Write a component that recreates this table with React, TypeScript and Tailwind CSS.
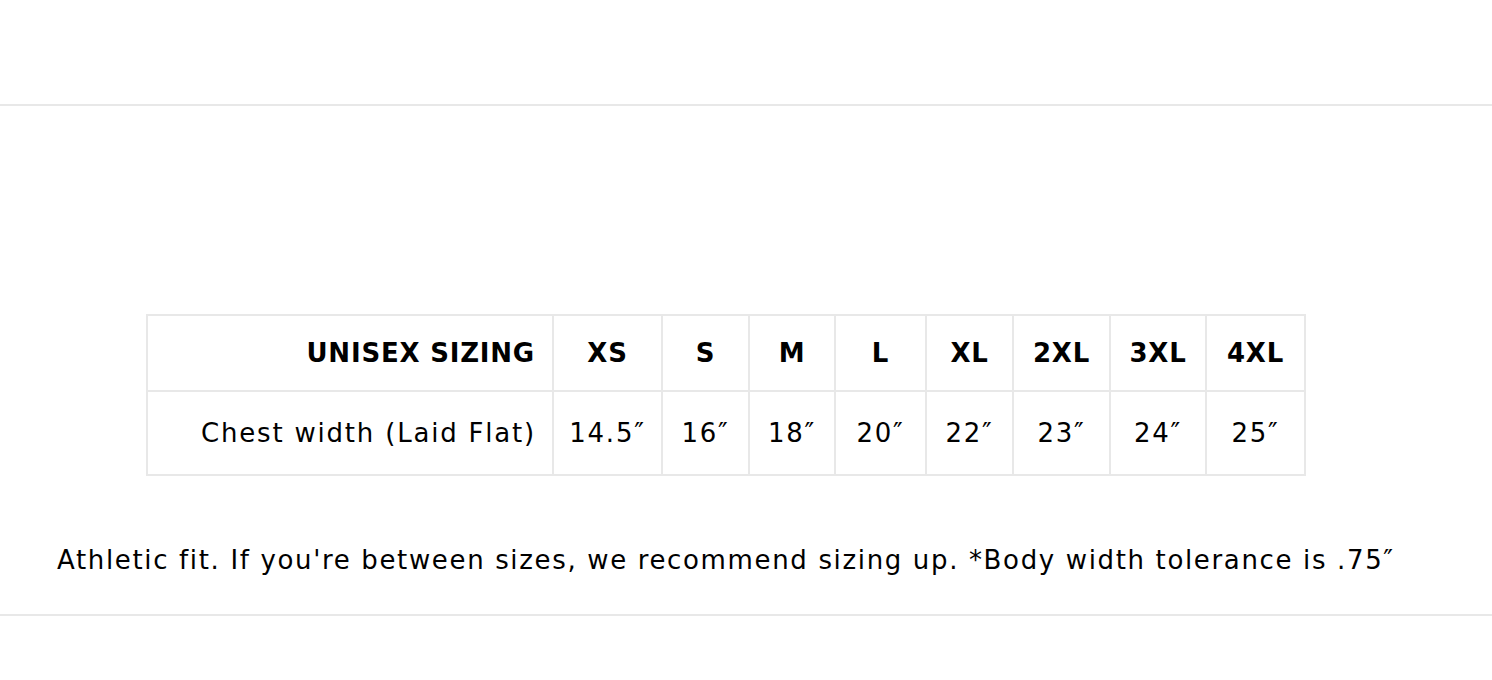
const sizes = ["XS", "S", "M", "L", "XL", "2XL", "3XL", "4XL"];
const chest = ["14.5″", "16″", "18″", "20″", "22″", "23″", "24″", "25″"];
const widths = ["w-[109px]", "w-[87px]", "w-[86px]", "w-[91px]", "w-[87px]", "w-[97px]", "w-[96px]", "w-[99px]"];

export default function App() {
  return (
    <div className="min-h-screen bg-white text-black" style={{ fontFamily: "'DejaVu Sans', 'Noto Sans', sans-serif" }}>
      <div className="h-[106px] border-b-2 border-[#e8e8e8]" />

      <section className="px-[57px] pt-[208px]">
        <table className="ml-[89px] border-collapse border-2 border-[#e8e8e8] text-[26px] tracking-[1.8px]">
          <thead>
            <tr className="h-[76px]">
              <th className="w-[406px] border-2 border-[#e8e8e8] pr-[17px] text-right font-bold uppercase tracking-[0.8px]">
                Unisex Sizing
              </th>
              {sizes.map((s, i) => (
                <th key={s} className={`${widths[i]} border-2 border-[#e8e8e8] text-center font-bold tracking-[0.8px]`}>
                  {s}
                </th>
              ))}
            </tr>
          </thead>
          <tbody>
            <tr className="h-[84px]">
              <td className="border-2 border-[#e8e8e8] pr-[16px] text-right">Chest width (Laid Flat)</td>
              {chest.map((c) => (
                <td key={c} className="border-2 border-[#e8e8e8] text-center">
                  {c}
                </td>
              ))}
            </tr>
          </tbody>
        </table>

        <p className="mt-[64px] pb-[34px] text-[26px] leading-[40px] tracking-[1.65px]">
          Athletic fit. If you're between sizes, we recommend sizing up. *Body width tolerance is .75″
        </p>
      </section>

      <div className="border-t-2 border-[#e8e8e8]" />
    </div>
  );
}
